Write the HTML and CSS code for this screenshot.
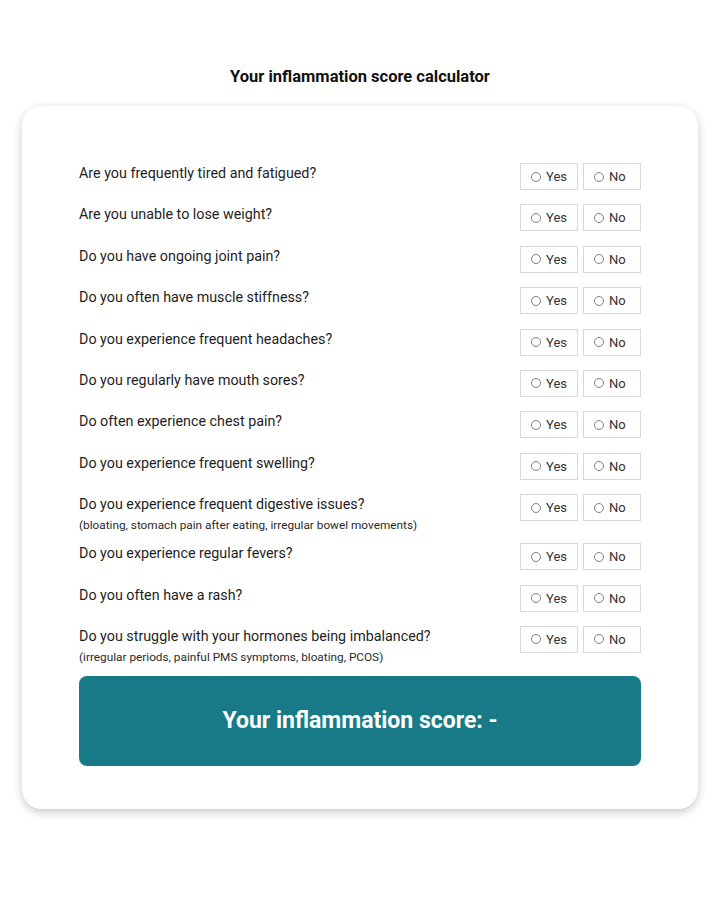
FILE: index.html
```html
<!DOCTYPE html>
<html lang="en">
<head>
<meta charset="utf-8">
<title>Inflammation score calculator</title>
<link rel="stylesheet" href="styles.css">
</head>
<body>
<div class="page">
  <h1 class="title">Your inflammation score calculator</h1>
  <div class="card">
    <div class="q-row">
      <div class="q-text"><div class="q-main">Are you frequently tired and fatigued?</div></div>
      <div class="q-opts"><label class="opt"><span class="radio"></span>Yes</label><label class="opt"><span class="radio"></span>No</label></div>
    </div>
    <div class="q-row">
      <div class="q-text"><div class="q-main">Are you unable to lose weight?</div></div>
      <div class="q-opts"><label class="opt"><span class="radio"></span>Yes</label><label class="opt"><span class="radio"></span>No</label></div>
    </div>
    <div class="q-row">
      <div class="q-text"><div class="q-main">Do you have ongoing joint pain?</div></div>
      <div class="q-opts"><label class="opt"><span class="radio"></span>Yes</label><label class="opt"><span class="radio"></span>No</label></div>
    </div>
    <div class="q-row">
      <div class="q-text"><div class="q-main">Do you often have muscle stiffness?</div></div>
      <div class="q-opts"><label class="opt"><span class="radio"></span>Yes</label><label class="opt"><span class="radio"></span>No</label></div>
    </div>
    <div class="q-row">
      <div class="q-text"><div class="q-main">Do you experience frequent headaches?</div></div>
      <div class="q-opts"><label class="opt"><span class="radio"></span>Yes</label><label class="opt"><span class="radio"></span>No</label></div>
    </div>
    <div class="q-row">
      <div class="q-text"><div class="q-main">Do you regularly have mouth sores?</div></div>
      <div class="q-opts"><label class="opt"><span class="radio"></span>Yes</label><label class="opt"><span class="radio"></span>No</label></div>
    </div>
    <div class="q-row">
      <div class="q-text"><div class="q-main">Do often experience chest pain?</div></div>
      <div class="q-opts"><label class="opt"><span class="radio"></span>Yes</label><label class="opt"><span class="radio"></span>No</label></div>
    </div>
    <div class="q-row">
      <div class="q-text"><div class="q-main">Do you experience frequent swelling?</div></div>
      <div class="q-opts"><label class="opt"><span class="radio"></span>Yes</label><label class="opt"><span class="radio"></span>No</label></div>
    </div>
    <div class="q-row">
      <div class="q-text"><div class="q-main">Do you experience frequent digestive issues?</div><div class="q-sub">(bloating, stomach pain after eating, irregular bowel movements)</div></div>
      <div class="q-opts"><label class="opt"><span class="radio"></span>Yes</label><label class="opt"><span class="radio"></span>No</label></div>
    </div>
    <div class="q-row">
      <div class="q-text"><div class="q-main">Do you experience regular fevers?</div></div>
      <div class="q-opts"><label class="opt"><span class="radio"></span>Yes</label><label class="opt"><span class="radio"></span>No</label></div>
    </div>
    <div class="q-row">
      <div class="q-text"><div class="q-main">Do you often have a rash?</div></div>
      <div class="q-opts"><label class="opt"><span class="radio"></span>Yes</label><label class="opt"><span class="radio"></span>No</label></div>
    </div>
    <div class="q-row">
      <div class="q-text"><div class="q-main">Do you struggle with your hormones being imbalanced?</div><div class="q-sub">(irregular periods, painful PMS symptoms, bloating, PCOS)</div></div>
      <div class="q-opts"><label class="opt"><span class="radio"></span>Yes</label><label class="opt"><span class="radio"></span>No</label></div>
    </div>
    <div class="score">Your inflammation score: -</div>
  </div>
</div>
</body>
</html>
```

FILE: styles.css
```css
* { box-sizing: border-box; }
html, body { margin: 0; padding: 0; background: #ffffff; }
body {
  font-family: Roboto, "Liberation Sans", Arial, sans-serif;
  color: #1f1f1f;
}
.page {
  width: 720px;
  padding: 67px 22px 40px;
}
.title {
  margin: 0 0 20px;
  text-align: center;
  font-size: 16.5px;
  line-height: 19px;
  font-weight: 700;
  color: #111;
}
.card {
  background: #fff;
  border-radius: 20px;
  box-shadow: 0 3px 10px rgba(0, 0, 0, 0.22);
  padding: 57px 57px 43px;
}
.q-row {
  display: flex;
  justify-content: space-between;
  align-items: flex-start;
  min-height: 41.4px;
  padding-bottom: 10px;
}
.q-text { flex: 1; }
.q-main {
  font-size: 14.3px;
  line-height: 20px;
  color: #1e1e1e;
}
.q-sub {
  margin-top: 3px;
  font-size: 11.8px;
  line-height: 16px;
  color: #2a2a2a;
}
.q-opts {
  display: flex;
  gap: 5px;
}
.opt {
  width: 58px;
  height: 27px;
  border: 1px solid #d9d9d9;
  display: flex;
  align-items: center;
  padding-left: 10px;
  font-size: 13px;
  color: #333;
}
.radio {
  width: 10px;
  height: 10px;
  border: 1px solid #808080;
  border-radius: 50%;
  margin-right: 5px;
  flex: none;
}
.score {
  margin-top: 1px;
  height: 90px;
  border-radius: 8px;
  background: #177a86;
  color: #fff;
  font-size: 23px;
  font-weight: 700;
  display: flex;
  align-items: center;
  justify-content: center;
}
```
